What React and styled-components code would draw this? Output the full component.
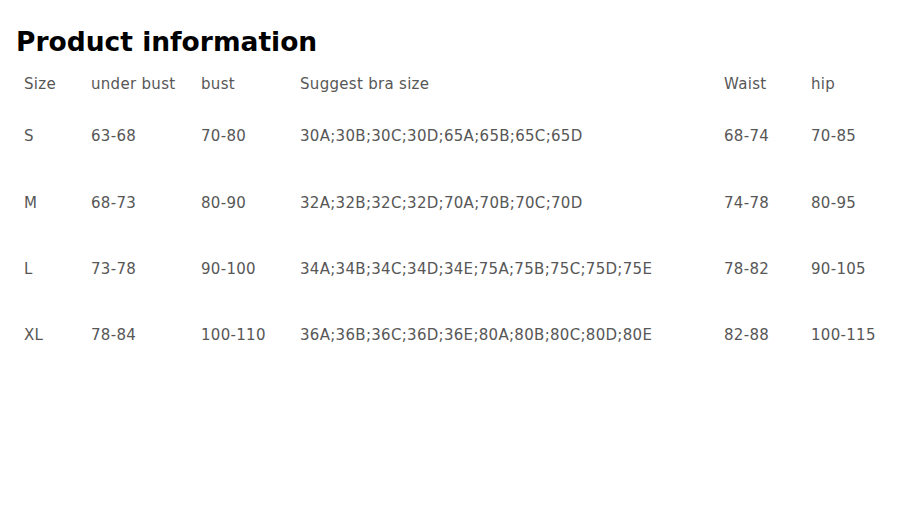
import React from "react";
import styled, { createGlobalStyle } from "styled-components";

const Global = createGlobalStyle`
  html, body { margin: 0; padding: 0; background: #fff; }
  body { font-family: "DejaVu Sans", Verdana, sans-serif; }
`;

const Page = styled.div`
  width: 923px;
  height: 519px;
  background: #fff;
  padding: 26px 0 0 0;
  box-sizing: border-box;
`;

const Title = styled.h1`
  margin: 0 0 0 16px;
  font-size: 26.5px;
  line-height: 32px;
  font-weight: bold;
  color: #000;
`;

const Table = styled.div`
  display: grid;
  grid-template-columns: 67px 110px 99px 424px 87px 1fr;
  padding-left: 24px;
  margin-top: 7px;
`;

const Cell = styled.div`
  height: ${(p) => (p.$head ? "38px" : "66.4px")};
  display: flex;
  align-items: center;
  font-size: 15px;
  letter-spacing: 0.3px;
  color: #575757;
  white-space: nowrap;
`;

const head = ["Size", "under bust", "bust", "Suggest bra size", "Waist", "hip"];
const rows = [
  ["S", "63-68", "70-80", "30A;30B;30C;30D;65A;65B;65C;65D", "68-74", "70-85"],
  ["M", "68-73", "80-90", "32A;32B;32C;32D;70A;70B;70C;70D", "74-78", "80-95"],
  ["L", "73-78", "90-100", "34A;34B;34C;34D;34E;75A;75B;75C;75D;75E", "78-82", "90-105"],
  ["XL", "78-84", "100-110", "36A;36B;36C;36D;36E;80A;80B;80C;80D;80E", "82-88", "100-115"],
];

export default function App() {
  return (
    <Page>
      <Global />
      <Title>Product information</Title>
      <Table>
        {head.map((h) => (
          <Cell key={h} $head>{h}</Cell>
        ))}
        {rows.map((r, i) =>
          r.map((c, j) => <Cell key={i + "-" + j}>{c}</Cell>)
        )}
      </Table>
    </Page>
  );
}
